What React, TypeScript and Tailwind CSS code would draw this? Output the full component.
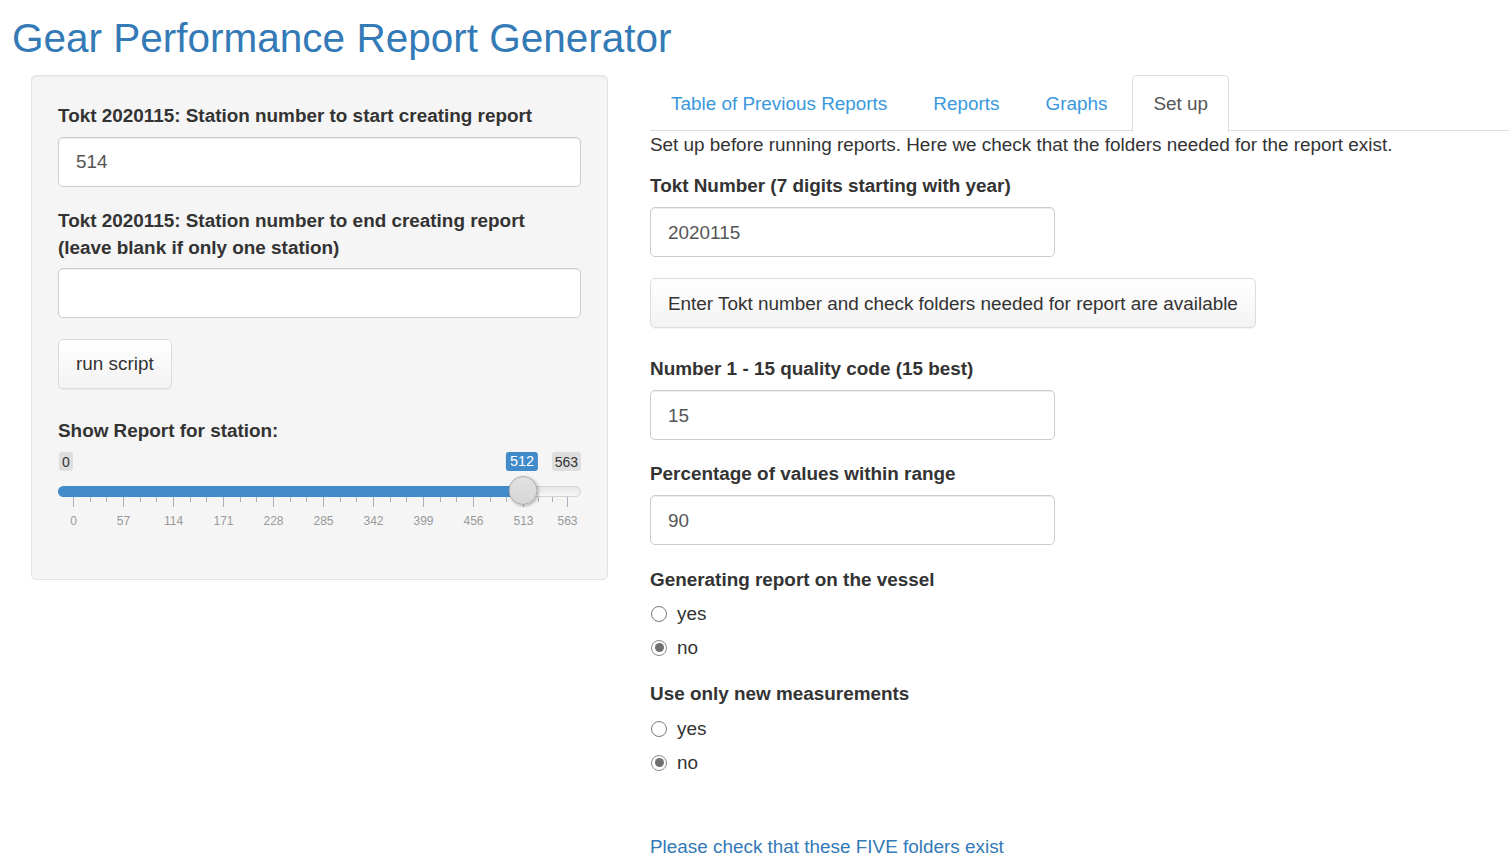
import React from "react";

const FONT = { fontFamily: '"Liberation Sans", Arial, Helvetica, sans-serif' };

function TextInput({ value, width }: { value: string; width: string }) {
  return (
    <div
      className={`${width} h-[50px] rounded-[5px] border border-[#cccccc] bg-white px-[17px] flex items-center text-[18.9px] text-[#555555] shadow-[inset_0_1px_1px_rgba(0,0,0,0.075)]`}
    >
      {value}
    </div>
  );
}

function Btn({ children }: { children: React.ReactNode }) {
  return (
    <div className="inline-flex h-[50px] items-center rounded-[5px] border border-[#dcdcdc] bg-gradient-to-b from-white to-[#f3f3f3] px-[17px] text-[18.9px] text-[#333333] shadow-[0_1px_1px_rgba(0,0,0,0.05)]">
      {children}
    </div>
  );
}

function Radio({ label, checked }: { label: string; checked?: boolean }) {
  return (
    <div className="flex h-[27px] items-center text-[18.9px] text-[#333333]">
      <div
        className={`ml-[1px] flex h-[16px] w-[16px] items-center justify-center rounded-full border ${
          checked ? "border-[#8a8a8a]" : "border-[#7a7a7a]"
        } bg-white`}
      >
        {checked && <div className="h-[9px] w-[9px] rounded-full bg-[#707070]" />}
      </div>
      <span className="ml-[10px]">{label}</span>
    </div>
  );
}

function Slider() {
  const majors = [0, 57, 114, 171, 228, 285, 342, 399, 456, 513];
  const majorX = majors.map((_, i) => 15 + 50 * i);
  const allMajor = [...majorX, 509];
  const minors: number[] = [];
  for (let i = 0; i < majorX.length - 1; i++) {
    minors.push(majorX[i] + 50 / 3, majorX[i] + 100 / 3);
  }
  minors.push(465 + 44 / 3, 465 + 88 / 3);
  const labels = [...majors.map(String), "563"];
  const handleX = 464;
  return (
    <div className="relative h-[100px] w-[523px]">
      {/* min / max / value badges */}
      <div className="absolute left-[1px] top-[8px] flex h-[19px] items-center rounded-[3px] bg-[#dedede] px-[3px] text-[14px] leading-none text-[#333]">
        0
      </div>
      <div className="absolute right-0 top-[8px] flex h-[19px] items-center rounded-[3px] bg-[#dedede] px-[3px] text-[14px] leading-none text-[#333]">
        563
      </div>
      <div
        className="absolute top-[8px] flex h-[19px] -translate-x-1/2 items-center rounded-[3px] bg-[#428bca] px-[4px] text-[14.5px] leading-none text-white"
        style={{ left: handleX }}
      >
        512
      </div>
      {/* track */}
      <div className="absolute left-0 top-[42px] h-[11px] w-[523px] rounded-full border border-[#d3d3d3] bg-gradient-to-b from-[#e6e6e6] to-[#f7f7f7]" />
      <div
        className="absolute left-0 top-[42px] h-[11px] rounded-l-full bg-[#428bca]"
        style={{ width: handleX }}
      />
      {/* ticks */}
      {allMajor.map((x, i) => (
        <div
          key={"M" + i}
          className="absolute top-[53px] h-[10px] w-px bg-[#a9b3c0]"
          style={{ left: x }}
        />
      ))}
      {minors.map((x, i) => (
        <div
          key={"m" + i}
          className="absolute top-[53px] h-[5px] w-px bg-[#a9b3c0]"
          style={{ left: Math.round(x) }}
        />
      ))}
      {allMajor.map((x, i) => (
        <div
          key={"L" + i}
          className="absolute top-[70px] w-[40px] -translate-x-1/2 text-center text-[12px] leading-[14px] text-[#999999]"
          style={{ left: x + 0.5 }}
        >
          {labels[i]}
        </div>
      ))}
      {/* handle */}
      <div
        className="absolute top-[32px] h-[29px] w-[29px] -translate-x-1/2 rounded-full border border-[#aaaaaa] bg-gradient-to-b from-[#e2e2e2] to-[#d6d6d6] shadow-[1px_1px_3px_rgba(0,0,0,0.3)]"
        style={{ left: handleX + 0.5 }}
      />
    </div>
  );
}

export default function App() {
  const tabs = ["Table of Previous Reports", "Reports", "Graphs"];
  return (
    <div className="min-h-[866px] w-[1509px] overflow-hidden bg-white text-[#333333]" style={FONT}>
      <h2 className="ml-[12px] mt-[16px] mb-[15px] h-[44px] text-[40.5px] font-normal leading-[44px] text-[#337ab7]">
        Gear Performance Report Generator
      </h2>
      <div className="flex items-start">
        {/* sidebar */}
        <div className="ml-[31px] w-[577px] rounded-[5px] border border-[#e3e3e3] bg-[#f5f5f5] px-[26px] pt-[26px] pb-[35px] shadow-[inset_0_1px_1px_rgba(0,0,0,0.05)]">
          <div className="mb-[8px] text-[18.9px] font-bold leading-[27px]">
            Tokt 2020115: Station number to start creating report
          </div>
          <TextInput value="514" width="w-[523px]" />
          <div className="mt-[20px] mb-[7px] text-[18.9px] font-bold leading-[27px]">
            Tokt 2020115: Station number to end creating report
            <br />
            (leave blank if only one station)
          </div>
          <TextInput value="" width="w-[523px]" />
          <div className="mt-[21px]">
            <Btn>run script</Btn>
          </div>
          <div className="mt-[28px] text-[18.9px] font-bold leading-[27px]">Show Report for station:</div>
          <Slider />
        </div>

        {/* main */}
        <div className="ml-[42px] flex-1">
          <div className="flex h-[56px] border-b border-[#dddddd]">
            {tabs.map((t) => (
              <div
                key={t}
                className="mr-[4px] h-[56px] border border-transparent px-[20px] py-[13.5px] text-[18.9px] leading-[27px] text-[#3a98dc]"
              >
                {t}
              </div>
            ))}
            <div className="relative h-[57px] rounded-t-[5px] border border-b-0 border-[#dddddd] bg-white px-[20px] py-[13.5px] text-[18.9px] leading-[27px] text-[#555555]">
              Set up
            </div>
          </div>
          <div className="text-[18.9px] leading-[27px]">
            <p className="mb-[14px]">
              Set up before running reports. Here we check that the folders needed for the report exist.
            </p>
            <div className="mb-[8px] font-bold">Tokt Number (7 digits starting with year)</div>
            <TextInput value="2020115" width="w-[405px]" />
            <div className="mt-[21px]">
              <Btn>Enter Tokt number and check folders needed for report are available</Btn>
            </div>
            <div className="mt-[27px] mb-[8px] font-bold">Number 1 - 15 quality code (15 best)</div>
            <TextInput value="15" width="w-[405px]" />
            <div className="mt-[20px] mb-[8px] font-bold">Percentage of values within range</div>
            <TextInput value="90" width="w-[405px]" />
            <div className="mt-[21px] mb-[7px] font-bold">Generating report on the vessel</div>
            <Radio label="yes" />
            <div className="mt-[7px]">
              <Radio label="no" checked />
            </div>
            <div className="mt-[19px] mb-[8px] font-bold">Use only new measurements</div>
            <Radio label="yes" />
            <div className="mt-[7px]">
              <Radio label="no" checked />
            </div>
            <div className="mt-[57px] text-[#337ab7]">Please check that these FIVE folders exist</div>
          </div>
        </div>
      </div>
    </div>
  );
}
